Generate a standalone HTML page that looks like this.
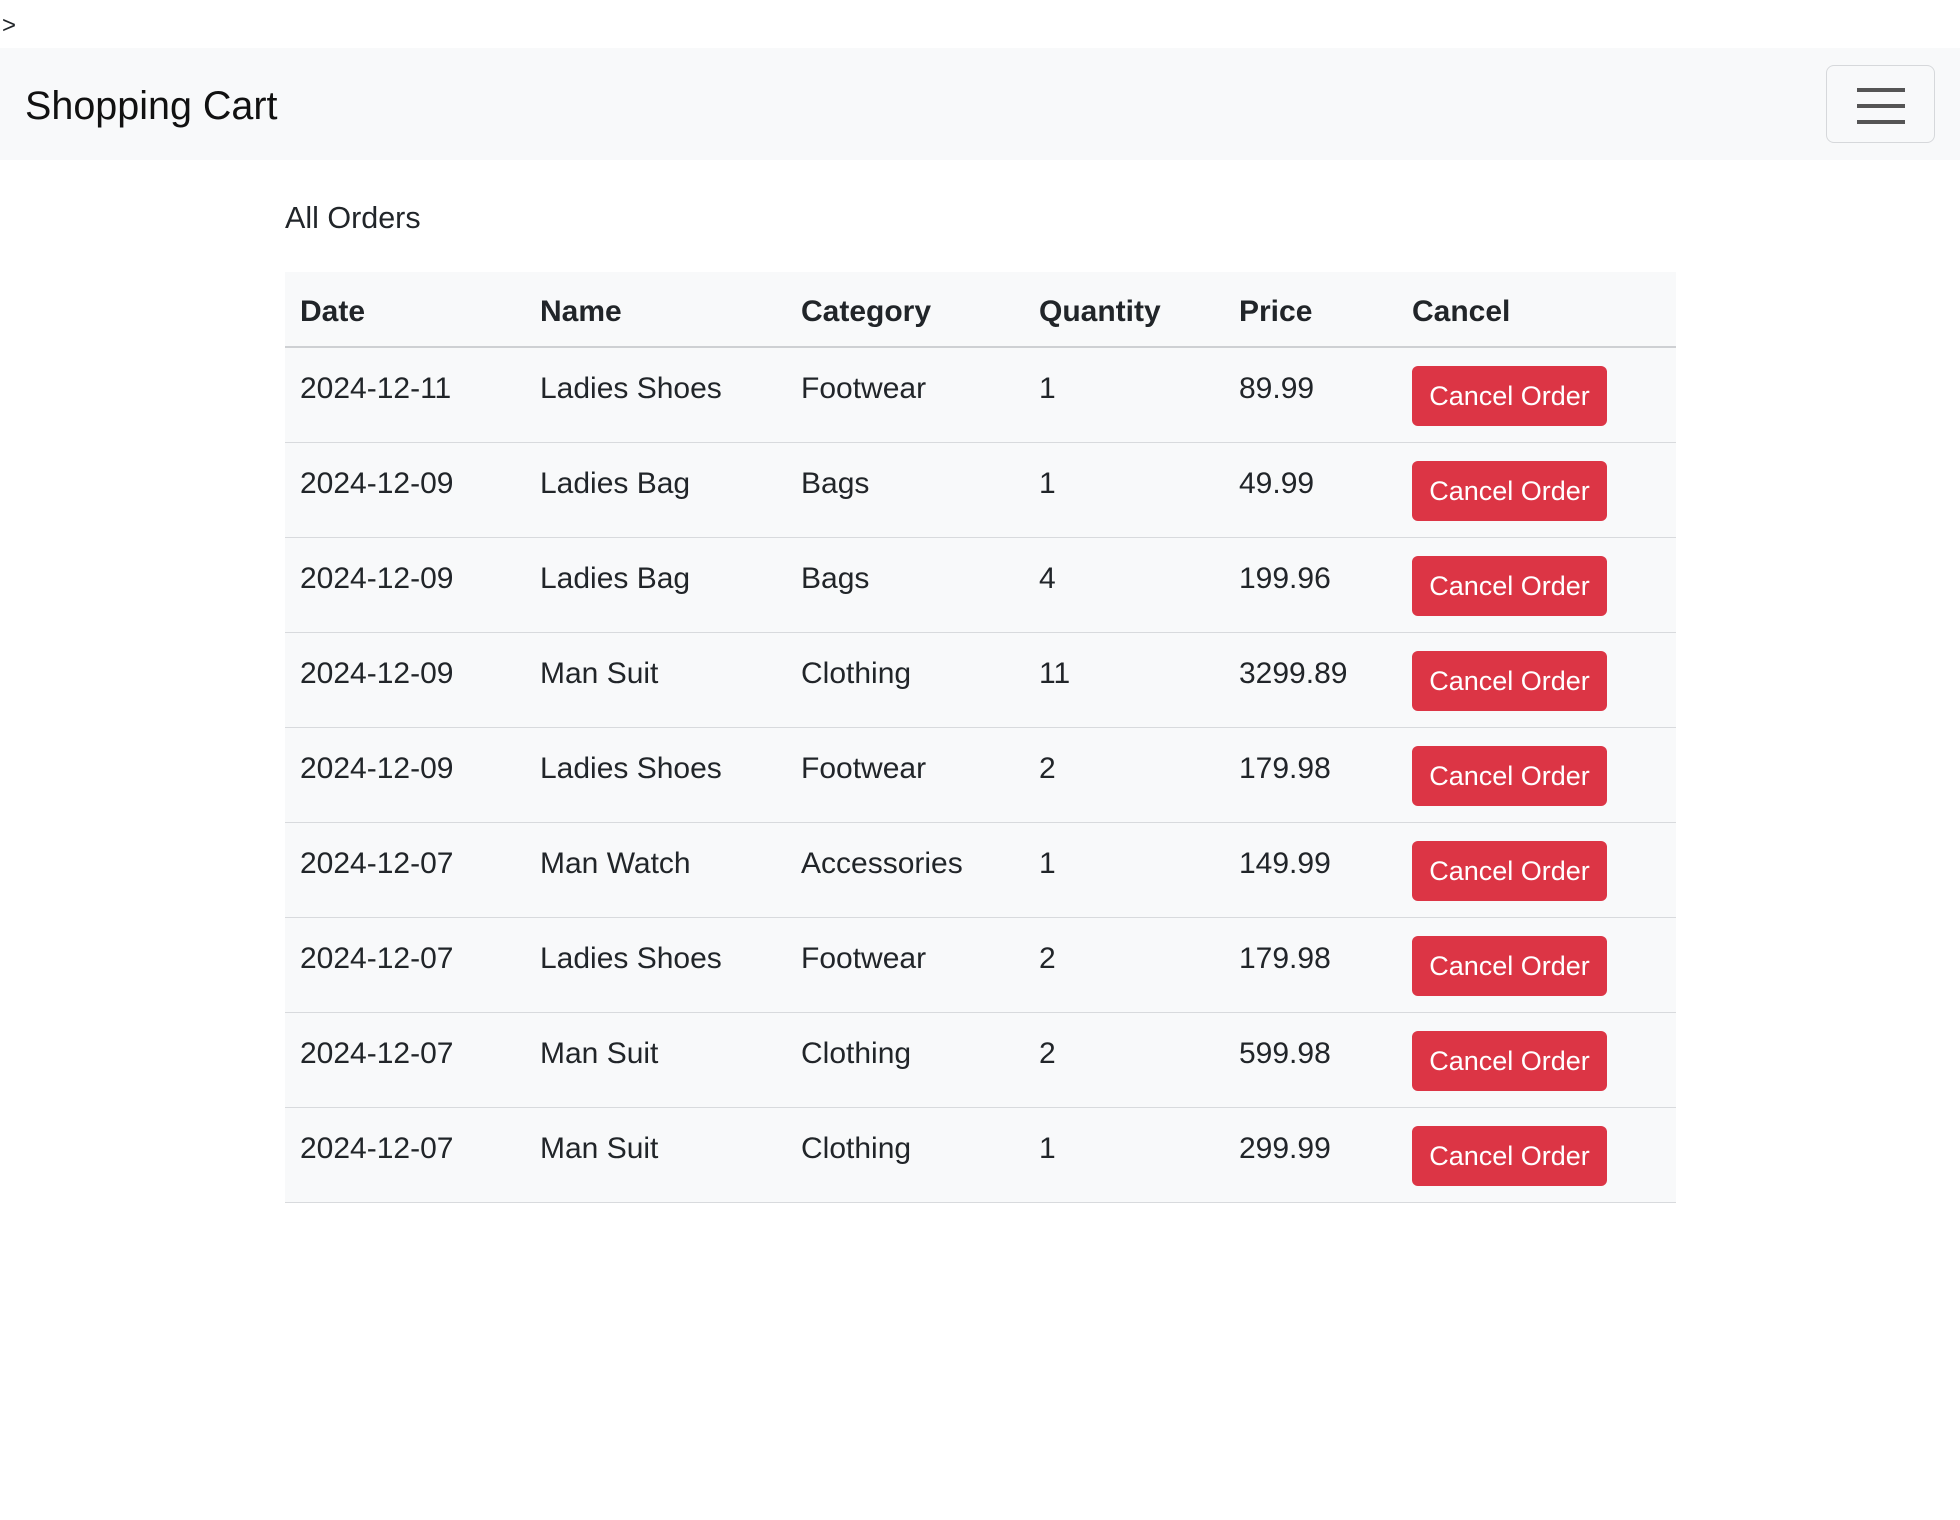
<!DOCTYPE html>
<html><head><meta charset="utf-8"><style>
*{box-sizing:border-box;margin:0;padding:0}
body{width:1960px;height:1520px;background:#fff;font-family:"Liberation Sans",sans-serif;color:#212529;position:relative;overflow:hidden}
.gt{position:absolute;left:2px;top:12px;font-size:24px}
.nav{position:absolute;left:0;top:48px;width:1960px;height:112px;background:#f8f9fa}
.title{position:absolute;left:25px;top:35px;font-size:39.5px;line-height:46px;color:#111}
.tog{position:absolute;left:1826px;top:17px;width:109px;height:78px;border:1.5px solid #d6d8db;border-radius:8px}
.tog i{position:absolute;left:30px;width:48px;height:4px;background:#555}
.h{position:absolute;left:285px;top:198px;font-size:30.5px;line-height:40px}
table{position:absolute;left:285px;top:272px;width:1391px;border-collapse:collapse;background:#f8f9fa;font-size:30px}
td,th{text-align:left;padding:0 0 0 15px;vertical-align:top;line-height:45px}
th{height:75px;padding-top:17px;border-bottom:2px solid #ced0d3;font-weight:bold}
td{height:95px;padding-top:18px;border-bottom:1.5px solid #d8dadd}
.b{display:inline-block;width:195px;height:60px;background:#dc3545;color:#fff;border-radius:6px;font-size:27px;line-height:60px;text-align:center;margin-top:0}
</style></head><body>
<div class="gt">&gt;</div>
<div class="nav"><div class="title">Shopping Cart</div><div class="tog"><i style="top:22px"></i><i style="top:38px"></i><i style="top:54px"></i></div></div>
<div class="h">All Orders</div>
<table>
<colgroup><col style="width:240px"><col style="width:261px"><col style="width:238px"><col style="width:200px"><col style="width:173px"><col></colgroup>
<tr><th>Date</th><th>Name</th><th>Category</th><th>Quantity</th><th>Price</th><th>Cancel</th></tr>
<tr><td>2024-12-11</td><td>Ladies Shoes</td><td>Footwear</td><td>1</td><td>89.99</td><td><span class="b">Cancel Order</span></td></tr>
<tr><td>2024-12-09</td><td>Ladies Bag</td><td>Bags</td><td>1</td><td>49.99</td><td><span class="b">Cancel Order</span></td></tr>
<tr><td>2024-12-09</td><td>Ladies Bag</td><td>Bags</td><td>4</td><td>199.96</td><td><span class="b">Cancel Order</span></td></tr>
<tr><td>2024-12-09</td><td>Man Suit</td><td>Clothing</td><td>11</td><td>3299.89</td><td><span class="b">Cancel Order</span></td></tr>
<tr><td>2024-12-09</td><td>Ladies Shoes</td><td>Footwear</td><td>2</td><td>179.98</td><td><span class="b">Cancel Order</span></td></tr>
<tr><td>2024-12-07</td><td>Man Watch</td><td>Accessories</td><td>1</td><td>149.99</td><td><span class="b">Cancel Order</span></td></tr>
<tr><td>2024-12-07</td><td>Ladies Shoes</td><td>Footwear</td><td>2</td><td>179.98</td><td><span class="b">Cancel Order</span></td></tr>
<tr><td>2024-12-07</td><td>Man Suit</td><td>Clothing</td><td>2</td><td>599.98</td><td><span class="b">Cancel Order</span></td></tr>
<tr><td>2024-12-07</td><td>Man Suit</td><td>Clothing</td><td>1</td><td>299.99</td><td><span class="b">Cancel Order</span></td></tr>
</table>
</body></html>
